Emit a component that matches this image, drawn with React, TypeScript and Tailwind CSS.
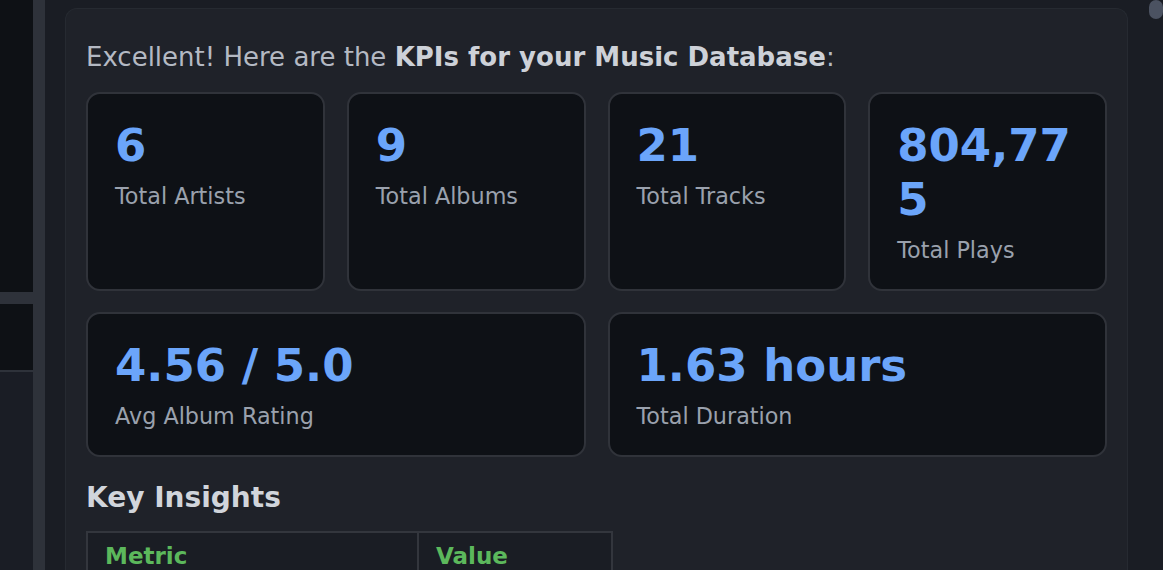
// KPI summary reply — a chat message that lays out database stats as cards.

const font = { fontFamily: '"DejaVu Sans", Verdana, sans-serif' }

interface Kpi {
  value: string
  label: string
  wide?: boolean
}

const kpis: Kpi[] = [
  { value: "6", label: "Total Artists" },
  { value: "9", label: "Total Albums" },
  { value: "21", label: "Total Tracks" },
  { value: "804,775", label: "Total Plays" },
  { value: "4.56 / 5.0", label: "Avg Album Rating", wide: true },
  { value: "1.63 hours", label: "Total Duration", wide: true },
]

const insights = [
  { metric: "Most Played Artist", value: "Aurora Lane" },
  { metric: "Top Rated Album", value: "Midnight Drive" },
  { metric: "Longest Track", value: "7:42" },
]

function KpiCard({ kpi }: { kpi: Kpi }) {
  return (
    <div
      className={`rounded-[14px] border-2 border-[#30333a] bg-[#0e1116] px-[27px] pt-[25px] pb-[24px] ${kpi.wide ? "col-span-2" : ""}`}
    >
      <div className="break-all text-[45px] font-bold leading-[54px] text-[#6ba5fa]">{kpi.value}</div>
      <div className="mt-2 text-[22.3px] leading-[30px] text-[#9aa1ad]">{kpi.label}</div>
    </div>
  )
}

export default function App() {
  return (
    <div className="flex h-[570px] w-full overflow-hidden bg-[#1a1d24]" style={font}>
      {/* left pane edge */}
      <div className="flex w-[33px] shrink-0 flex-col">
        <div className="h-[292px] bg-[#0e1115]" />
        <div className="h-[12px] bg-[#2e323a]" />
        <div className="h-[66px] bg-[#0e1115]" />
        <div className="h-[2px] bg-[#2e323a]" />
        <div className="flex-1 bg-[#1a1d25]" />
      </div>
      <div className="w-[12px] shrink-0 bg-[#2e323a]" />

      <div className="flex min-w-0 flex-1 pt-[8px] pl-[20px]">
        <div className="min-w-0 flex-1 rounded-t-[12px] border border-b-0 border-[#262a31] bg-[#1f2229] px-[20px] pt-[30px]">
          <p className="text-[26px] leading-[36px] text-[#b4b9c3]">
            Excellent! Here are the <b className="font-bold text-[#cdd1d8]">KPIs for your Music Database</b>:
          </p>

          <div className="mt-[17px] grid grid-cols-4 gap-x-[22px] gap-y-[21px]">
            {kpis.map(k => (
              <KpiCard key={k.label} kpi={k} />
            ))}
          </div>

          <h3 className="mt-[23px] text-[28px] font-bold leading-[36px] text-[#d1d5db]">Key Insights</h3>

          <table className="mt-[15px] w-[527px] border-collapse bg-[#1a1d24]">
            <thead>
              <tr>
                <th className="w-[331px] border-2 border-[#33363d] px-[17px] pt-[7px] pb-[7px] text-left text-[23px] font-bold leading-[32px] text-[#5cb85c]">
                  Metric
                </th>
                <th className="border-2 border-[#33363d] px-[17px] pt-[7px] pb-[7px] text-left text-[23px] font-bold leading-[32px] text-[#5cb85c]">
                  Value
                </th>
              </tr>
            </thead>
            <tbody>
              {insights.map(r => (
                <tr key={r.metric}>
                  <td className="border-2 border-[#33363d] px-[17px] py-[7px] text-[22px] leading-[32px] text-[#b4b9c3]">{r.metric}</td>
                  <td className="border-2 border-[#33363d] px-[17px] py-[7px] text-[22px] leading-[32px] text-[#b4b9c3]">{r.value}</td>
                </tr>
              ))}
            </tbody>
          </table>
        </div>

        {/* scroll gutter */}
        <div className="flex w-[35px] shrink-0 justify-end">
          <div className="-mt-[8px] h-[19px] w-[14px] rounded-full bg-[#4b5261]" />
        </div>
      </div>
    </div>
  )
}
